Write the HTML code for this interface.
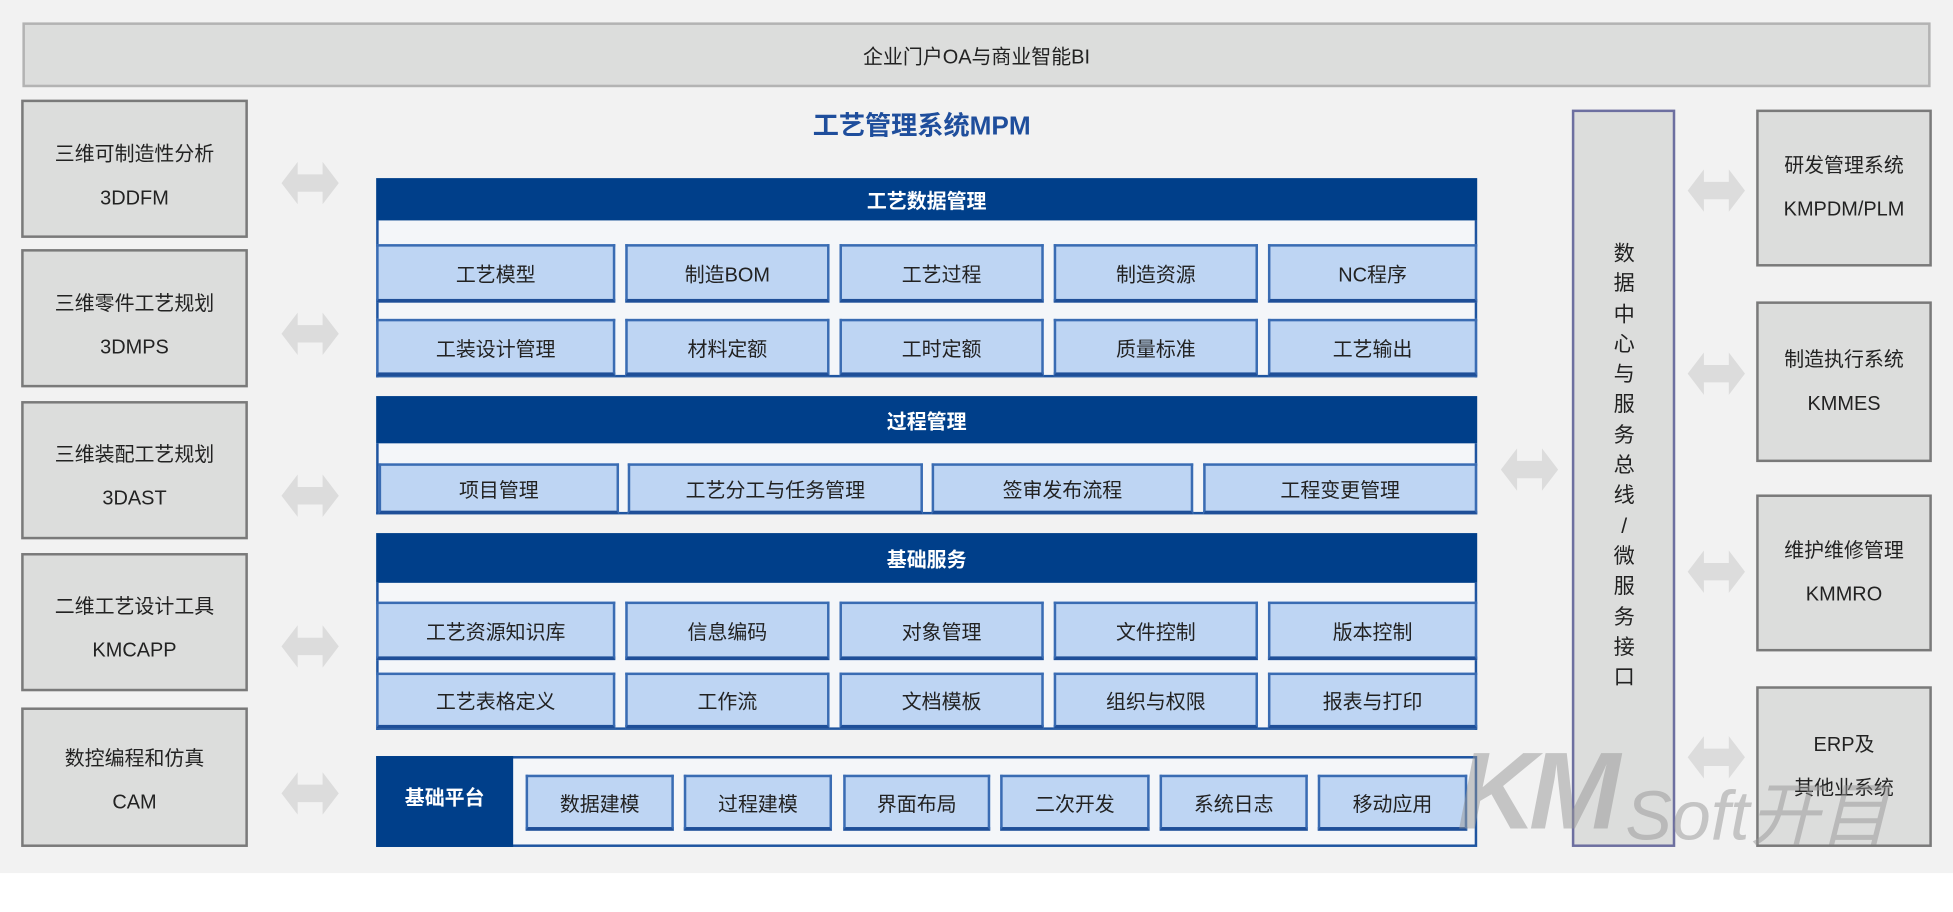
<!DOCTYPE html>
<html><head><meta charset="utf-8">
<style>
html,body{margin:0;padding:0;background:#fff;width:1953px;height:911px;overflow:hidden}
#s{position:absolute;left:0;top:0;width:1568px;height:732px;transform:scale(1.24553);transform-origin:0 0;font-family:"Liberation Sans","Noto Sans CJK SC",sans-serif;color:#222}
.a{position:absolute;box-sizing:border-box}
.bg{left:0;top:0;width:1568px;height:701px;background:#f2f2f2}
.g{background:#dcdddc;border:2px solid #7a7a7a;display:flex;flex-direction:column;align-items:center;justify-content:center;font-size:16px;line-height:35px;text-align:center}
.h{background:#003f8a;color:#fff;font-weight:bold;font-size:16px;display:flex;align-items:center;justify-content:center}
.w{background:#f4f6f9;border:2px solid #1f55a0;border-top:none}
.c{background:#bed5f3;border:2px solid #3a6cb3;border-bottom:3px solid #1f4f98;display:flex;align-items:center;justify-content:center;font-size:16px}
</style></head><body><div id="s">
<div class="a bg"></div>
<div class="a" style="left:18px;top:18px;width:1532px;height:52px;background:#dcdddc;border:2px solid #b3b3b3;display:flex;align-items:center;justify-content:center;font-size:16px">企业门户OA与商业智能BI</div>
<div class="a" style="left:590px;top:85px;width:300px;text-align:center;font-size:21px;font-weight:bold;color:#1f4e9c">工艺管理系统MPM</div>

<div class="a g" style="left:17px;top:80px;width:182px;height:111px;padding-top:12px"><div>三维可制造性分析</div><div>3DDFM</div></div>
<div class="a g" style="left:17px;top:200px;width:182px;height:111px;padding-top:12px"><div>三维零件工艺规划</div><div>3DMPS</div></div>
<div class="a g" style="left:17px;top:322px;width:182px;height:111px;padding-top:10px"><div>三维装配工艺规划</div><div>3DAST</div></div>
<div class="a g" style="left:17px;top:444px;width:182px;height:111px;padding-top:10px"><div>二维工艺设计工具</div><div>KMCAPP</div></div>
<div class="a g" style="left:17px;top:568px;width:182px;height:112px;padding-top:6px"><div>数控编程和仿真</div><div>CAM</div></div>

<svg class="a" style="left:0;top:0" width="1568" height="700">
<defs><path id="arr" d="M0 17 L13 0 L13 10 L33 10 L33 0 L46 17 L33 34 L33 24 L13 24 L13 34 Z" fill="#dcdcdc"/></defs>
<use href="#arr" x="226" y="130"/><use href="#arr" x="226" y="251"/><use href="#arr" x="226" y="381"/><use href="#arr" x="226" y="502"/><use href="#arr" x="226" y="620"/>
<use href="#arr" x="1355" y="136"/><use href="#arr" x="1355" y="283"/><use href="#arr" x="1355" y="442"/><use href="#arr" x="1355" y="591"/>
<use href="#arr" x="1205" y="360"/>
</svg>

<div class="a h" style="left:302px;top:143px;width:884px;height:34px">工艺数据管理</div>
<div class="a w" style="left:302px;top:177px;width:884px;height:126px"></div>
<div class="a c" style="left:302px;top:196px;width:192px;height:47px">工艺模型</div>
<div class="a c" style="left:502px;top:196px;width:164px;height:47px">制造BOM</div>
<div class="a c" style="left:674px;top:196px;width:164px;height:47px">工艺过程</div>
<div class="a c" style="left:846px;top:196px;width:164px;height:47px">制造资源</div>
<div class="a c" style="left:1018px;top:196px;width:168px;height:47px">NC程序</div>
<div class="a c" style="left:302px;top:256px;width:192px;height:46px">工装设计管理</div>
<div class="a c" style="left:502px;top:256px;width:164px;height:46px">材料定额</div>
<div class="a c" style="left:674px;top:256px;width:164px;height:46px">工时定额</div>
<div class="a c" style="left:846px;top:256px;width:164px;height:46px">质量标准</div>
<div class="a c" style="left:1018px;top:256px;width:168px;height:46px">工艺输出</div>

<div class="a h" style="left:302px;top:318px;width:884px;height:38px">过程管理</div>
<div class="a w" style="left:302px;top:356px;width:884px;height:57px"></div>
<div class="a c" style="left:304px;top:372px;width:193px;height:41px">项目管理</div>
<div class="a c" style="left:504px;top:372px;width:237px;height:41px">工艺分工与任务管理</div>
<div class="a c" style="left:748px;top:372px;width:210px;height:41px">签审发布流程</div>
<div class="a c" style="left:966px;top:372px;width:220px;height:41px">工程变更管理</div>

<div class="a h" style="left:302px;top:428px;width:884px;height:40px">基础服务</div>
<div class="a w" style="left:302px;top:468px;width:884px;height:118px"></div>
<div class="a c" style="left:302px;top:483px;width:192px;height:47px">工艺资源知识库</div>
<div class="a c" style="left:502px;top:483px;width:164px;height:47px">信息编码</div>
<div class="a c" style="left:674px;top:483px;width:164px;height:47px">对象管理</div>
<div class="a c" style="left:846px;top:483px;width:164px;height:47px">文件控制</div>
<div class="a c" style="left:1018px;top:483px;width:168px;height:47px">版本控制</div>
<div class="a c" style="left:302px;top:540px;width:192px;height:45px">工艺表格定义</div>
<div class="a c" style="left:502px;top:540px;width:164px;height:45px">工作流</div>
<div class="a c" style="left:674px;top:540px;width:164px;height:45px">文档模板</div>
<div class="a c" style="left:846px;top:540px;width:164px;height:45px">组织与权限</div>
<div class="a c" style="left:1018px;top:540px;width:168px;height:45px">报表与打印</div>

<div class="a" style="left:302px;top:607px;width:884px;height:73px;background:#f4f6f9;border:2px solid #1f55a0"></div>
<div class="a h" style="left:302px;top:607px;width:110px;height:73px;padding-bottom:10px">基础平台</div>
<div class="a c" style="left:422px;top:622px;width:119px;height:45px">数据建模</div>
<div class="a c" style="left:549px;top:622px;width:119px;height:45px">过程建模</div>
<div class="a c" style="left:677px;top:622px;width:118px;height:45px">界面布局</div>
<div class="a c" style="left:803px;top:622px;width:120px;height:45px">二次开发</div>
<div class="a c" style="left:931px;top:622px;width:119px;height:45px">系统日志</div>
<div class="a c" style="left:1058px;top:622px;width:120px;height:45px">移动应用</div>

<div class="a" style="left:1262px;top:88px;width:83px;height:592px;background:#dcdddc;border:2px solid #6d6fa0"></div>
<div class="a" style="left:1292px;top:192px;width:24px;font-size:17px;line-height:24.3px;text-align:center">数<br>据<br>中<br>心<br>与<br>服<br>务<br>总<br>线<br>/<br>微<br>服<br>务<br>接<br>口</div>

<div class="a g" style="left:1410px;top:88px;width:141px;height:126px"><div>研发管理系统</div><div>KMPDM/PLM</div></div>
<div class="a g" style="left:1410px;top:242px;width:141px;height:129px"><div>制造执行系统</div><div>KMMES</div></div>
<div class="a g" style="left:1410px;top:397px;width:141px;height:126px"><div>维护维修管理</div><div>KMMRO</div></div>
<div class="a g" style="left:1410px;top:551px;width:141px;height:129px"><div>ERP及</div><div>其他业系统</div></div>

<div class="a" style="left:1170px;top:590px;font-size:88px;font-style:italic;font-weight:bold;color:rgba(150,150,150,0.5);line-height:90px;letter-spacing:-6px">KM</div>
<div class="a" style="left:1305px;top:625px;font-size:56px;font-style:italic;color:rgba(150,150,150,0.5);line-height:60px">Soft开目</div>
</div></body></html>
